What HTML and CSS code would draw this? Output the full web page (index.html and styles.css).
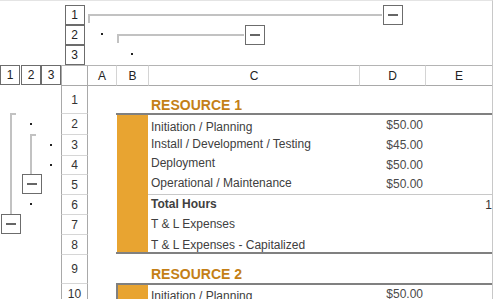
FILE: index.html
```html
<!DOCTYPE html>
<html lang="en">

<head>
 <meta charset="UTF-8">
 <title>Resources</title>
 <link rel="stylesheet" href="styles.css">
</head>

<body>

 <div class="sheet">

  <!-- column outline, level 1 -->
  <div></div><div></div><div></div>
  <div class="lvlcell"><span class="lvl">1</span></div>
  <div class="grp g1"><i class="brk"></i><span class="btn"><b></b></span></div>
  <div></div>

  <!-- column outline, level 2 -->
  <div></div><div></div><div></div>
  <div class="lvlcell"><span class="lvl">2</span></div>
  <div class="tdot"><i></i></div>
  <div class="grp g2"><i class="brk"></i><span class="btn"><b></b></span></div>
  <div></div><div></div>

  <!-- column outline, level 3 -->
  <div></div><div></div><div></div>
  <div class="lvlcell"><span class="lvl">3</span></div>
  <div></div>
  <div class="tdot"><i></i></div>
  <div></div><div></div><div></div>

  <!-- column headers -->
  <div class="hcell"><span class="lvl">1</span></div>
  <div class="hcell right"><span class="lvl">2</span></div>
  <div class="hcell"><span class="lvl">3</span></div>
  <div class="hd corner"></div>
  <div class="hd first">A</div>
  <div class="hd">B</div>
  <div class="hd">C</div>
  <div class="hd">D</div>
  <div class="hd">E</div>

  <!-- row 1 -->
  <div></div><div></div><div></div>
  <div class="rn first">1</div>
  <div></div><div></div>
  <div class="c title">RESOURCE 1</div>
  <div></div><div></div>

  <!-- row 2 -->
  <div class="ol"><i class="vl top"></i></div>
  <div class="odot"><i></i></div>
  <div></div>
  <div class="rn">2</div>
  <div></div>
  <div class="fill tt"></div>
  <div class="c tt">Initiation / Planning</div>
  <div class="d tt">$50.00</div>
  <div class="tt"></div>

  <!-- row 3 -->
  <div class="ol"><i class="vl"></i></div>
  <div class="ol"><i class="vl top"></i></div>
  <div class="odot"><i></i></div>
  <div class="rn">3</div>
  <div></div>
  <div class="fill"></div>
  <div class="c pb4">Install / Development / Testing</div>
  <div class="d">$45.00</div>
  <div></div>

  <!-- row 4 -->
  <div class="ol"><i class="vl"></i></div>
  <div class="ol"><i class="vl"></i></div>
  <div class="odot"><i></i></div>
  <div class="rn">4</div>
  <div></div>
  <div class="fill"></div>
  <div class="c pb4">Deployment</div>
  <div class="d">$50.00</div>
  <div></div>

  <!-- row 5 -->
  <div class="ol"><i class="vl"></i></div>
  <div class="obtn o2"><span class="btn"><b></b></span></div>
  <div></div>
  <div class="rn">5</div>
  <div></div>
  <div class="fill"></div>
  <div class="c pb4">Operational / Maintenance</div>
  <div class="d">$50.00</div>
  <div></div>

  <!-- row 6 -->
  <div class="ol"><i class="vl"></i></div>
  <div class="odot"><i></i></div>
  <div></div>
  <div class="rn">6</div>
  <div></div>
  <div class="fill"></div>
  <div class="c lt pb3 bold">Total Hours</div>
  <div class="d lt"></div>
  <div class="d lt num">1</div>

  <!-- row 7 -->
  <div class="obtn o1"><span class="btn"><b></b></span></div>
  <div></div><div></div>
  <div class="rn">7</div>
  <div></div>
  <div class="fill"></div>
  <div class="c pb3">T &amp; L Expenses</div>
  <div></div><div></div>

  <!-- row 8 -->
  <div></div><div></div><div></div>
  <div class="rn">8</div>
  <div></div>
  <div class="fill tb"></div>
  <div class="c tb">T &amp; L Expenses - Capitalized</div>
  <div class="tb"></div>
  <div class="tb"></div>

  <!-- row 9 -->
  <div></div><div></div><div></div>
  <div class="rn">9</div>
  <div></div><div></div>
  <div class="c title pb1">RESOURCE 2</div>
  <div></div><div></div>

  <!-- row 10 -->
  <div></div><div></div><div></div>
  <div class="rn">10</div>
  <div></div>
  <div class="fill box tt"></div>
  <div class="c tt">Initiation / Planning</div>
  <div class="d tt">$50.00</div>
  <div class="tt"></div>

 </div>

</body>

</html>
```

FILE: styles.css
```css
/* Base */
* {
    margin: 0;
    padding: 0;
    box-sizing: border-box;
}

body {
    background-color: #ffffff;
    color: #404040;
    font-family: "Liberation Sans", Arial, sans-serif;
    font-size: 12px;
}

/* Sheet grid: 3 outline columns, row header, A..E */
.sheet {
    width: 493px;
    height: 299px;
    overflow: hidden;
    border-top: 1px solid #e4e4e4;
    border-right: 1px solid #c8c8c8;
    padding-top: 4px;
    display: grid;
    grid-template-columns: 20px 21px 20px 27px 28px 32px 211px 66px 1fr;
    grid-template-rows: 20px 20px 20px 21px 27px 21px 21px 19px 20px 20px 20px 20px 29px 20px;
}

/* Outline level buttons */
.lvl {
    width: 20px;
    height: 20px;
    border: 1px solid #6c6c6c;
    display: flex;
    align-items: center;
    justify-content: center;
    color: #222;
    line-height: 1;
}

.lvlcell {
    display: flex;
    justify-content: center;
}

.hcell {
    display: flex;
    align-items: flex-start;
}

.hcell.right {
    justify-content: flex-end;
}

/* Collapse buttons */
.btn {
    width: 20px;
    height: 20px;
    border: 1px solid #6c6c6c;
    background-color: #ffffff;
    display: flex;
    align-items: center;
    justify-content: center;
    flex-shrink: 0;
}

.btn b {
    width: 10px;
    height: 2px;
    background-color: #666;
}

/* Column groups */
.grp {
    display: flex;
    align-items: flex-start;
}

.g1 {
    grid-column: span 4;
    padding-right: 22px;
}

.g2 {
    grid-column: span 2;
    padding-left: 1px;
    padding-right: 94px;
}

.brk {
    flex: 1;
    margin-top: 9px;
    margin-right: 1px;
    height: 9px;
    border-top: 2px solid #c2c2c2;
    border-left: 2px solid #c2c2c2;
}

.tdot {
    display: flex;
    justify-content: center;
    padding-top: 8px;
}

.tdot i,
.odot i {
    width: 2px;
    height: 2px;
    background-color: #222;
}

/* Row groups */
.ol {
    display: flex;
}

.vl {
    margin-left: 10px;
    width: 6px;
    border-left: 2px solid #c2c2c2;
}

.vl.top {
    border-top: 2px solid #c2c2c2;
}

.odot {
    display: flex;
    align-items: center;
    justify-content: center;
}

.obtn.o1 {
    padding-left: 1px;
}

.obtn.o2 {
    padding-left: 2px;
}

/* Headers */
.hd {
    display: flex;
    align-items: center;
    justify-content: center;
    color: #222;
    border-top: 1px solid #b4b4b4;
    border-bottom: 1px solid #a9a9a9;
    border-left: 1px solid #d4d4d4;
}

.hd.first {
    border-left: none;
}

.hd.corner {
    border-left: 1px solid #a9a9a9;
    border-right: 1px solid #a9a9a9;
}

.rn {
    display: flex;
    align-items: center;
    justify-content: center;
    color: #333;
    border-left: 1px solid #a9a9a9;
    border-right: 1px solid #a9a9a9;
    border-top: 1px solid #d6d6d6;
}

.rn.first {
    border-top: none;
}

/* Cells */
.c {
    display: flex;
    align-items: flex-end;
    padding-left: 3px;
    line-height: 14px;
    white-space: nowrap;
}

.d {
    display: flex;
    align-items: center;
    justify-content: flex-end;
    padding-right: 2px;
    line-height: 14px;
    color: #4a4a4a;
}

.d.num {
    padding-right: 0;
    color: #333;
}

.title {
    font-size: 14px;
    font-weight: bold;
    line-height: 16px;
    color: #c47f17;
}

.bold {
    font-weight: bold;
}

.pb1 { padding-bottom: 1px; }
.pb3 { padding-bottom: 3px; }
.pb4 { padding-bottom: 4px; }

.fill {
    background: linear-gradient(90deg, transparent 1px, #e8a431 1px);
}

.fill.box {
    background: #e8a431;
    border-left: 2px solid #808080;
}

.tt {
    border-top: 2px solid #808080;
}

.tb {
    border-bottom: 2px solid #808080;
}

.lt {
    border-top: 1px solid #c8c8c8;
}
```
